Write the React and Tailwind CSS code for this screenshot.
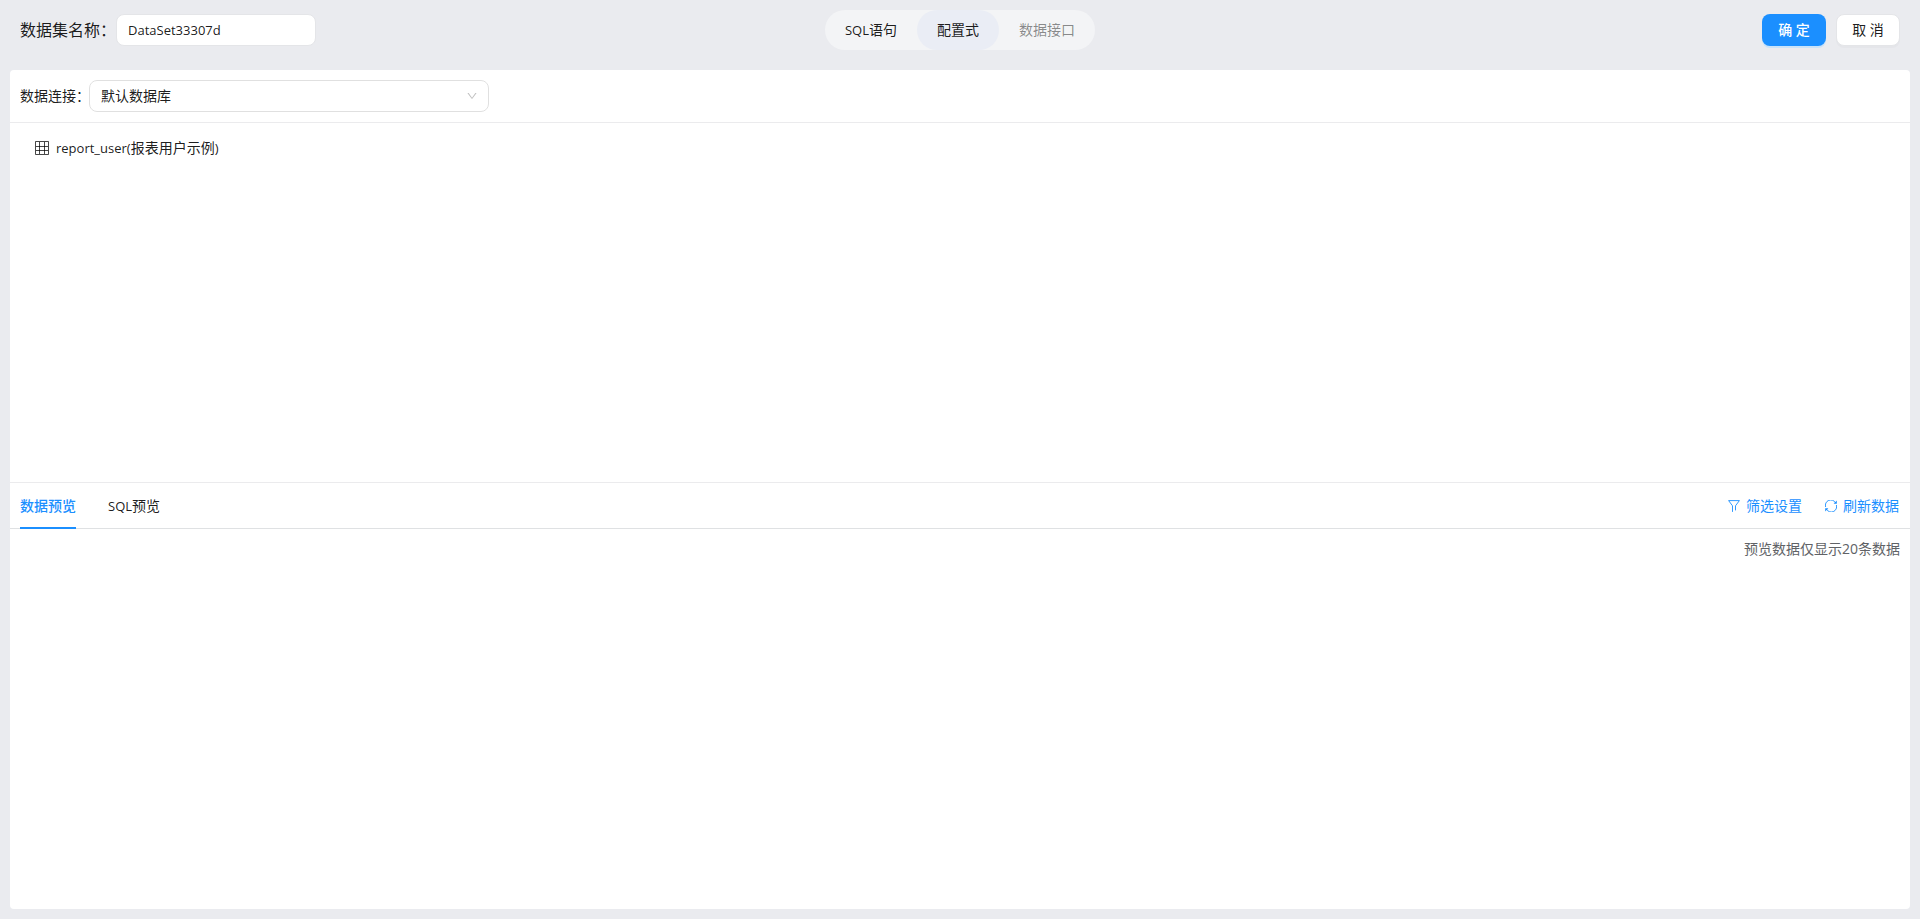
import { AiOutlineDown } from 'react-icons/ai';

const modes = [
  { latin: 'SQL', label: '语句', tone: 'text-black/90' },
  { label: '配置式', tone: 'bg-[#eaedf5] text-black/90', active: true },
  { label: '数据接口', tone: 'text-black/45', disabled: true },
];

function TableIcon() {
  return (
    <svg viewBox="0 0 14 14" className="size-3.5" fill="none" stroke="currentColor" strokeOpacity="0.8" aria-hidden="true">
      <path d="M0.5 0.5h13v13h-13zM1 5.5h12M1 9.5h12M4.5 1v12M9.5 1v12" />
    </svg>
  );
}

function FilterIcon() {
  return (
    <svg viewBox="0 0 12 12" className="size-3" fill="none" stroke="currentColor" strokeWidth="0.9" strokeLinejoin="round" strokeLinecap="round" aria-hidden="true">
      <path d="M4.5 11.5V5.8L0.6 0.6h10.8L7.5 5.8v4.2" />
    </svg>
  );
}

function RefreshIcon() {
  return (
    <svg viewBox="0 0 12 12" className="size-3" fill="none" stroke="currentColor" strokeWidth="0.9" aria-hidden="true">
      <path d="M0.6 7A5.4 5.4 0 0 1 10.6 3M11.4 5A5.4 5.4 0 0 1 1.4 9" />
      <path d="M11.8 0.6v3.2H8.6zM0.2 11.4V8.2h3.2z" fill="currentColor" stroke="none" />
    </svg>
  );
}

export default function App() {
  return (
    <div lang="zh-CN" className="flex min-h-screen flex-col bg-[#eaebef] font-['Open_Sans','Noto_Sans_CJK_SC',sans-serif] text-sm text-black/90">
      <header className="grid h-[60px] grid-cols-[1fr_auto_1fr] items-center px-5">
        <div className="flex items-center">
          <label htmlFor="name" className="w-24 text-base whitespace-nowrap">数据集名称：</label>
          <input
            id="name"
            defaultValue="DataSet33307d"
            className="h-8 w-[200px] rounded-lg border border-[#e4e5e8] bg-white px-[11px] text-[13px] outline-none"
          />
        </div>
        <nav className="flex h-10 rounded-full bg-[#f3f4f6]">
          {modes.map((m) => (
            <button
              key={m.label}
              type="button"
              disabled={m.disabled}
              aria-pressed={!!m.active}
              className={`h-10 rounded-full px-5 ${m.tone}`}
            >
              {m.latin && <span className="text-[13px]">{m.latin}</span>}
              {m.label}
            </button>
          ))}
        </nav>
        <div className="flex justify-end gap-2.5">
          <button type="button" className="h-8 w-16 rounded-lg bg-[#1b8fff] font-medium text-white shadow-[0_2px_0_#c9e2f8]">
            确 定
          </button>
          <button type="button" className="h-8 w-16 rounded-lg border border-[#e4e5e8] bg-white shadow-[0_2px_0_#e5e6ea]">
            取 消
          </button>
        </div>
      </header>

      <main className="m-2.5 flex flex-1 flex-col overflow-hidden rounded bg-white">
        <section className="flex grow-[412] basis-0 flex-col">
          <div className="flex h-[53px] items-center border-b border-[#ebebed] px-2.5">
            <label htmlFor="source" className="w-[69px] whitespace-nowrap">数据连接：</label>
            <div className="relative w-[400px]">
              <select
                id="source"
                className="h-8 w-full appearance-none rounded-lg border border-[#e0e0e0] bg-white px-[11px] outline-none"
              >
                <option>默认数据库</option>
              </select>
              <AiOutlineDown className="pointer-events-none absolute top-2.5 right-[11px] size-3 text-black/25" />
            </div>
          </div>
          <ul className="px-[25px] py-3">
            <li className="flex h-[26px] items-center gap-[7px]">
              <TableIcon />
              <span>
                <span className="text-[13px]">report_user(</span>报表用户示例<span className="text-[13px]">)</span>
              </span>
            </li>
          </ul>
        </section>

        <section className="flex grow-[427] basis-0 flex-col border-t border-[#ebebed]">
          <div className="flex h-[46px] items-stretch justify-between border-b border-[#dfe1e3] px-2.5">
            <div role="tablist" className="flex gap-8">
              <button
                type="button"
                role="tab"
                aria-selected="true"
                className="-mb-px border-b-2 border-[#1b8fff] pt-0.5 font-medium text-[#1b8fff]"
              >
                数据预览
              </button>
              <button type="button" role="tab" aria-selected="false" className="pt-0.5">
                <span className="text-[13px]">SQL</span>预览
              </button>
            </div>
            <div className="flex items-center gap-[23px] pt-0.5 pr-px text-[#1b8fff]">
              <button type="button" className="flex items-center gap-1.5">
                <FilterIcon />
                筛选设置
              </button>
              <button type="button" className="flex items-center gap-1.5">
                <RefreshIcon />
                刷新数据
              </button>
            </div>
          </div>
          <p className="px-2.5 py-2.5 text-right text-[#606266]">预览数据仅显示20条数据</p>
        </section>
      </main>
    </div>
  );
}
